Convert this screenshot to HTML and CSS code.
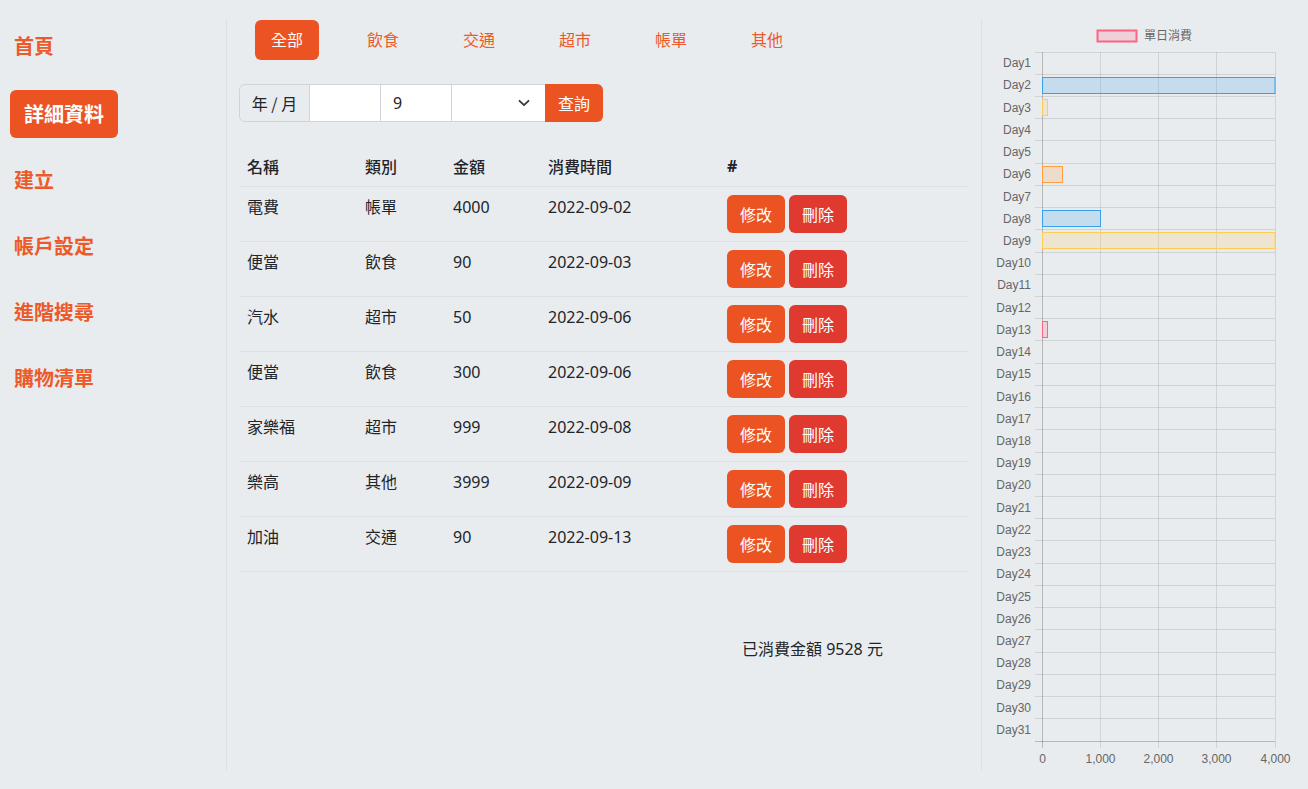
FILE: index.html
```html
<!DOCTYPE html>
<html lang="zh-Hant">
<head>
<meta charset="utf-8">
<title>詳細資料</title>
<link rel="stylesheet" href="styles.css">
</head>
<body>
<div class="app">
  <nav class="sidebar">
    <a class="nav-link" href="#">首頁</a>
    <a class="nav-link active" href="#">詳細資料</a>
    <a class="nav-link" href="#">建立</a>
    <a class="nav-link" href="#">帳戶設定</a>
    <a class="nav-link" href="#">進階搜尋</a>
    <a class="nav-link" href="#">購物清單</a>
  </nav>

  <main class="main">
    <div class="tabs">
      <a class="tab active" href="#">全部</a>
      <a class="tab" href="#">飲食</a>
      <a class="tab" href="#">交通</a>
      <a class="tab" href="#">超市</a>
      <a class="tab" href="#">帳單</a>
      <a class="tab" href="#">其他</a>
    </div>

    <div class="input-group">
      <span class="ig-label">年 / 月</span>
      <span class="ig-input ig-year"></span>
      <span class="ig-input ig-month">9</span>
      <span class="ig-select">
        <svg class="chev" width="12" height="8" viewBox="0 0 12 8"><path d="M1.5 1.8 6 6.2 10.5 1.8" fill="none" stroke="#343a40" stroke-width="1.8" stroke-linecap="round" stroke-linejoin="round"/></svg>
      </span>
      <button class="ig-btn">查詢</button>
    </div>

    <table class="records">
      <colgroup>
        <col class="c-name"><col class="c-type"><col class="c-amt"><col class="c-time"><col class="c-act">
      </colgroup>
      <thead>
        <tr><th>名稱</th><th>類別</th><th>金額</th><th>消費時間</th><th class="hash">#</th></tr>
      </thead>
      <tbody>
        <tr><td>電費</td><td>帳單</td><td>4000</td><td>2022-09-02</td><td class="acts"><div class="btns"><button class="btn edit">修改</button><button class="btn del">刪除</button></div></td></tr>
        <tr><td>便當</td><td>飲食</td><td>90</td><td>2022-09-03</td><td class="acts"><div class="btns"><button class="btn edit">修改</button><button class="btn del">刪除</button></div></td></tr>
        <tr><td>汽水</td><td>超市</td><td>50</td><td>2022-09-06</td><td class="acts"><div class="btns"><button class="btn edit">修改</button><button class="btn del">刪除</button></div></td></tr>
        <tr><td>便當</td><td>飲食</td><td>300</td><td>2022-09-06</td><td class="acts"><div class="btns"><button class="btn edit">修改</button><button class="btn del">刪除</button></div></td></tr>
        <tr><td>家樂福</td><td>超市</td><td>999</td><td>2022-09-08</td><td class="acts"><div class="btns"><button class="btn edit">修改</button><button class="btn del">刪除</button></div></td></tr>
        <tr><td>樂高</td><td>其他</td><td>3999</td><td>2022-09-09</td><td class="acts"><div class="btns"><button class="btn edit">修改</button><button class="btn del">刪除</button></div></td></tr>
        <tr><td>加油</td><td>交通</td><td>90</td><td>2022-09-13</td><td class="acts"><div class="btns"><button class="btn edit">修改</button><button class="btn del">刪除</button></div></td></tr>
      </tbody>
    </table>

    <p class="total">已消費金額 9528 元</p>
  </main>

  <aside class="chart">
    <svg class="chart-svg" width="326" height="750" viewBox="1 0 326 750">
      <g class="legend">
        <rect x="116.5" y="10.5" width="39" height="11" fill="rgba(255,99,132,0.2)" stroke="rgb(255,99,132)" stroke-width="2"/>
        <text x="163" y="15.5">單日消費</text>
      </g>
      <path class="grid" d="M54 32.5H294M54 54.5H294M54 76.5H294M54 98.5H294M54 120.5H294M54 143.5H294M54 165.5H294M54 187.5H294M54 209.5H294M54 232.5H294M54 254.5H294M54 276.5H294M54 298.5H294M54 320.5H294M54 343.5H294M54 365.5H294M54 387.5H294M54 409.5H294M54 432.5H294M54 454.5H294M54 476.5H294M54 498.5H294M54 520.5H294M54 543.5H294M54 565.5H294M54 587.5H294M54 609.5H294M54 632.5H294M54 654.5H294M54 676.5H294M54 698.5H294M119.5 32V728M177.5 32V728M235.5 32V728M294.5 32V728"/>
      <path class="axis" d="M61.5 32V728M54 721.5H294"/>
      <g class="bars">
        <rect x="61.5" y="57.5" width="232.5" height="16" fill="rgba(54,162,235,0.2)" stroke="rgb(54,162,235)"/>
        <rect x="61.5" y="79.5" width="5" height="16" fill="rgba(255,205,86,0.2)" stroke="rgb(255,205,86)"/>
        <rect x="61.5" y="146.5" width="20" height="16" fill="rgba(255,159,64,0.2)" stroke="rgb(255,159,64)"/>
        <rect x="61.5" y="190.5" width="58" height="16" fill="rgba(54,162,235,0.2)" stroke="rgb(54,162,235)"/>
        <rect x="61.5" y="212.5" width="232.5" height="16" fill="rgba(255,205,86,0.2)" stroke="rgb(255,205,86)"/>
        <rect x="61.5" y="301.5" width="5" height="16" fill="rgba(255,99,132,0.2)" stroke="rgb(255,99,132)"/>
      </g>
      <g class="ylabels" text-anchor="end">
        <text x="50" y="43.1">Day1</text>
        <text x="50" y="65.3">Day2</text>
        <text x="50" y="87.6">Day3</text>
        <text x="50" y="109.8">Day4</text>
        <text x="50" y="132.0">Day5</text>
        <text x="50" y="154.2">Day6</text>
        <text x="50" y="176.5">Day7</text>
        <text x="50" y="198.7">Day8</text>
        <text x="50" y="220.9">Day9</text>
        <text x="50" y="243.2">Day10</text>
        <text x="50" y="265.4">Day11</text>
        <text x="50" y="287.6">Day12</text>
        <text x="50" y="309.8">Day13</text>
        <text x="50" y="332.1">Day14</text>
        <text x="50" y="354.3">Day15</text>
        <text x="50" y="376.5">Day16</text>
        <text x="50" y="398.7">Day17</text>
        <text x="50" y="421.0">Day18</text>
        <text x="50" y="443.2">Day19</text>
        <text x="50" y="465.4">Day20</text>
        <text x="50" y="487.6">Day21</text>
        <text x="50" y="509.9">Day22</text>
        <text x="50" y="532.1">Day23</text>
        <text x="50" y="554.3">Day24</text>
        <text x="50" y="576.5">Day25</text>
        <text x="50" y="598.8">Day26</text>
        <text x="50" y="621.0">Day27</text>
        <text x="50" y="643.2">Day28</text>
        <text x="50" y="665.4">Day29</text>
        <text x="50" y="687.7">Day30</text>
        <text x="50" y="709.9">Day31</text>
      </g>
      <g class="xlabels" text-anchor="middle">
        <text x="61.5" y="739">0</text>
        <text x="119.5" y="739">1,000</text>
        <text x="177.5" y="739">2,000</text>
        <text x="235.5" y="739">3,000</text>
        <text x="294.5" y="739">4,000</text>
      </g>
    </svg>
  </aside>
</div>
</body>
</html>
```

FILE: styles.css
```css
* { box-sizing: border-box; }

html, body {
  margin: 0;
  padding: 0;
  background: #e9ecef;
}

body {
  font-family: "Noto Sans", "Noto Sans CJK TC", sans-serif;
  font-size: 16px;
  color: #212529;
  line-height: 1.5;
}

.app {
  display: flex;
  padding-top: 20px;
  height: 789px;
}

/* sidebar */
.sidebar {
  width: 227px;
  height: 750px;
  border-right: 1px solid #dcdfe3;
  display: flex;
  flex-direction: column;
  align-items: flex-start;
  gap: 18px;
  padding: 2px 0 0 10px;
}

.nav-link {
  display: block;
  height: 48px;
  line-height: 48px;
  padding: 0 4px;
  font-family: "Noto Sans CJK TC", sans-serif;
  font-size: 20px;
  font-weight: 700;
  color: #ec5a2b;
  text-decoration: none;
  border-radius: 6px;
}

.nav-link.active {
  background: #ec5322;
  color: #fff;
  padding: 0 14px;
  margin-top: 2px;
}

/* main */
.main {
  width: 754px;
  padding: 0 13px 0 12px;
}

.tabs {
  display: flex;
  gap: 32px;
  margin-left: 16px;
  height: 40px;
}

.tab {
  display: block;
  width: 64px;
  height: 40px;
  line-height: 39px;
  text-align: center;
  color: #ec5a2b;
  text-decoration: none;
  font-family: "Noto Sans CJK TC", sans-serif;
  font-size: 16px;
  border-radius: 6px;
}

.tab.active {
  background: #ec5322;
  color: #fff;
}

.input-group {
  display: flex;
  margin-top: 24px;
  height: 38px;
}

.ig-label, .ig-input, .ig-select {
  border: 1px solid #ced4da;
  height: 38px;
  line-height: 36px;
  flex: none;
}

.ig-label {
  width: 71px;
  background: #e9ecef;
  border-radius: 6px 0 0 6px;
  text-align: center;
  color: #212529;
  font-family: "Noto Sans CJK TC", sans-serif;
}

.ig-input {
  width: 72px;
  background: #fff;
  margin-left: -1px;
  padding-left: 12px;
}

.ig-select {
  width: 95px;
  background: #fff;
  margin-left: -1px;
  display: flex;
  align-items: center;
  justify-content: flex-end;
  padding-right: 15px;
}

.chev { display: block; }

.ig-btn {
  flex: none;
  width: 58px;
  height: 38px;
  margin-left: -1px;
  border: 0;
  background: #ec5322;
  color: #fff;
  font-family: "Noto Sans CJK TC", sans-serif;
  font-size: 16px;
  border-radius: 0 6px 6px 0;
  padding: 0;
}

/* table */
.records {
  margin-top: 24px;
  width: 729px;
  border-collapse: collapse;
  table-layout: fixed;
}

.c-name { width: 118px; }
.c-type { width: 88px; }
.c-amt { width: 95px; }
.c-time { width: 179px; }
.c-act { width: 249px; }

.records th, .records td {
  text-align: left;
  vertical-align: top;
  padding: 8px 8px;
  border-bottom: 1px solid #dcdfe3;
  line-height: 24px;
  font-family: "Noto Sans", "Noto Sans CJK TC", sans-serif;
}

.records th {
  font-weight: 500;
  font-family: "Noto Sans CJK TC", sans-serif;
}

.records th.hash {
  font-weight: 700;
  font-family: "Noto Sans", sans-serif;
}

.records td {
  height: 55px;
}

.records td.acts {
  padding: 8px 8px 8px 8px;
}

.btns {
  display: flex;
  gap: 4px;
}

.btn {
  width: 58px;
  height: 38px;
  border: 0;
  border-radius: 6px;
  color: #fff;
  font-family: "Noto Sans CJK TC", sans-serif;
  font-size: 16px;
  padding: 0;
}

.btn.edit { background: #ec5322; }
.btn.del { background: #e0392f; }

.total {
  margin: 65px 0 0 0;
  padding-left: 503px;
  line-height: 24px;
}

/* chart */
.chart {
  width: 327px;
  height: 750px;
  border-left: 1px solid #dcdfe3;
}

.chart-svg { display: block; }

.chart-svg text {
  font-family: "Liberation Sans", Arial, "Noto Sans CJK TC", sans-serif;
  font-size: 12px;
  fill: #666;
  dominant-baseline: central;
}

.grid {
  stroke: rgba(0, 0, 0, 0.1);
  stroke-width: 1;
  fill: none;
}

.axis {
  stroke: rgba(0, 0, 0, 0.22);
  stroke-width: 1;
  fill: none;
}
```
